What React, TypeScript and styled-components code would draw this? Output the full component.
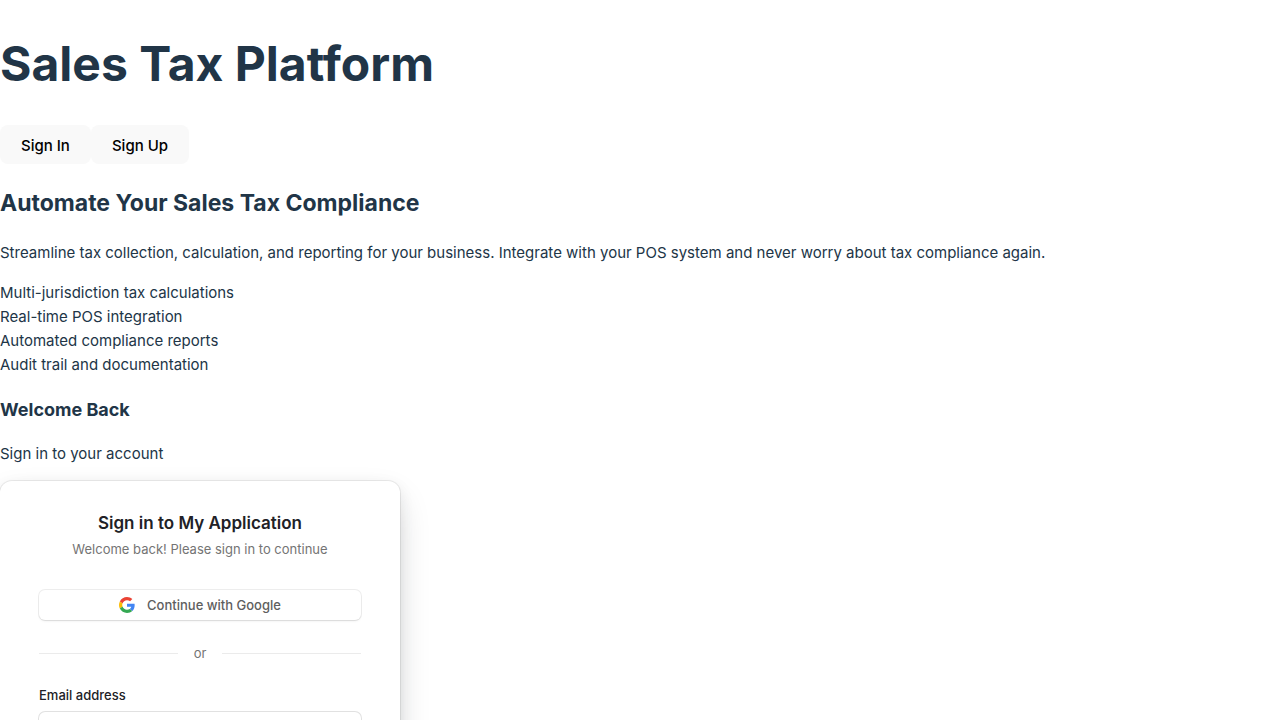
import React from 'react';
import styled, { createGlobalStyle } from 'styled-components';

const GlobalStyle = createGlobalStyle`
  *, *::before, *::after { box-sizing: border-box; }
  body {
    margin: 0;
    background: #ffffff;
    color: #213547;
    font-family: Inter, "Liberation Sans", sans-serif;
    font-size: 15px;
    line-height: 24px;
  }
`;

const Page = styled.main`
  display: flex;
  flex-direction: column;
  padding-top: 36px;
`;

const PageTitle = styled.h1`
  margin: 0 0 33px;
  font-size: 48px;
  line-height: 56px;
  font-weight: 700;
`;

const Tabs = styled.div`
  display: flex;
`;

const TabButton = styled.button`
  height: 39px;
  padding: 2px 21px 0;
  border: 0;
  border-radius: 8px;
  background: #f9f9f9;
  color: #000000;
  font: inherit;
  font-weight: 500;
  cursor: pointer;
`;

const SectionTitle = styled.h2`
  margin: 21px 0 20px;
  font-size: 23px;
  line-height: 36px;
  font-weight: 700;
`;

const Text = styled.p`
  margin: 0 0 16px;
`;

const FeatureList = styled.ul`
  margin: 0 0 19px;
  padding: 0;
  list-style: none;
`;

const FormTitle = styled.h3`
  margin: 0 0 18px;
  font-size: 18px;
  line-height: 28px;
  font-weight: 700;
`;

const FormHint = styled.p`
  margin: 0 0 15px;
`;

const Card = styled.section`
  display: flex;
  flex-direction: column;
  width: 100%;
  max-width: 400px;
  padding: 30px 39px 120px;
  border-radius: 12px;
  background: #ffffff;
  box-shadow:
    0 5px 15px 0 rgba(0, 0, 0, 0.08),
    0 15px 35px -5px rgba(25, 28, 33, 0.2),
    0 0 0 1px rgba(0, 0, 0, 0.07);
  font-size: 13px;
  line-height: 18px;
`;

const CardTitle = styled.h4`
  margin: 0 0 5px;
  color: #212126;
  font-size: 17px;
  line-height: 24px;
  font-weight: 600;
  text-align: center;
`;

const CardSubtitle = styled.p`
  margin: 0 0 32px;
  color: #747474;
  text-align: center;
`;

const GoogleButton = styled.button`
  display: flex;
  align-items: center;
  justify-content: center;
  gap: 12px;
  height: 30px;
  border: 0;
  border-radius: 6px;
  background: #ffffff;
  box-shadow:
    0 0 0 1px rgba(0, 0, 0, 0.07),
    0 2px 3px -1px rgba(0, 0, 0, 0.08),
    0 1px 0 0 rgba(0, 0, 0, 0.02);
  color: #5e5e5e;
  font: inherit;
  font-weight: 500;
  cursor: pointer;
`;

const Divider = styled.div`
  display: flex;
  align-items: center;
  gap: 16px;
  margin: 24px 0;
  color: #747474;

  &::before,
  &::after {
    content: '';
    flex: 1;
    height: 1px;
    background: #ebebeb;
  }
`;

const Field = styled.div`
  display: flex;
  flex-direction: column;
  gap: 8px;
`;

const FieldLabel = styled.label`
  color: #212126;
  font-weight: 500;
`;

const FieldInput = styled.input`
  height: 30px;
  padding: 6px 12px;
  border: 0;
  border-radius: 6px;
  background: #ffffff;
  box-shadow: 0 0 0 1px rgba(0, 0, 0, 0.11), 0 0 1px 0 rgba(0, 0, 0, 0.08);
  color: #212126;
  font: inherit;
`;

const features = [
  'Multi-jurisdiction tax calculations',
  'Real-time POS integration',
  'Automated compliance reports',
  'Audit trail and documentation',
];

const GoogleIcon = () => (
  <svg width="16" height="16" viewBox="0 0 48 48" aria-hidden="true">
    <path fill="#EA4335" d="M24 9.5c3.54 0 6.71 1.22 9.21 3.6l6.85-6.85C35.9 2.38 30.47 0 24 0 14.62 0 6.51 5.38 2.56 13.22l7.98 6.19C12.43 13.72 17.74 9.5 24 9.5z" />
    <path fill="#4285F4" d="M46.98 24.55c0-1.57-.15-3.09-.38-4.55H24v9.02h12.94c-.58 2.96-2.26 5.48-4.78 7.18l7.73 6c4.51-4.18 7.09-10.36 7.09-17.65z" />
    <path fill="#FBBC05" d="M10.53 28.59c-.48-1.45-.76-2.99-.76-4.59s.27-3.14.76-4.59l-7.98-6.19C.92 16.46 0 20.12 0 24s.92 7.54 2.56 10.78l7.97-6.19z" />
    <path fill="#34A853" d="M24 48c6.48 0 11.93-2.13 15.89-5.81l-7.73-6c-2.15 1.45-4.92 2.3-8.16 2.3-6.26 0-11.57-4.22-13.47-9.91l-7.98 6.19C6.51 42.62 14.62 48 24 48z" />
  </svg>
);

export default function App() {
  return (
    <>
      <GlobalStyle />
      <Page>
        <PageTitle>Sales Tax Platform</PageTitle>
        <Tabs>
          <TabButton type="button">Sign In</TabButton>
          <TabButton type="button">Sign Up</TabButton>
        </Tabs>
        <SectionTitle>Automate Your Sales Tax Compliance</SectionTitle>
        <Text>
          Streamline tax collection, calculation, and reporting for your business. Integrate with
          your POS system and never worry about tax compliance again.
        </Text>
        <FeatureList>
          {features.map((feature) => (
            <li key={feature}>{feature}</li>
          ))}
        </FeatureList>
        <FormTitle>Welcome Back</FormTitle>
        <FormHint>Sign in to your account</FormHint>
        <Card>
          <CardTitle>Sign in to My Application</CardTitle>
          <CardSubtitle>Welcome back! Please sign in to continue</CardSubtitle>
          <GoogleButton type="button">
            <GoogleIcon />
            Continue with Google
          </GoogleButton>
          <Divider>or</Divider>
          <Field>
            <FieldLabel htmlFor="email">Email address</FieldLabel>
            <FieldInput id="email" type="email" />
          </Field>
        </Card>
      </Page>
    </>
  );
}
